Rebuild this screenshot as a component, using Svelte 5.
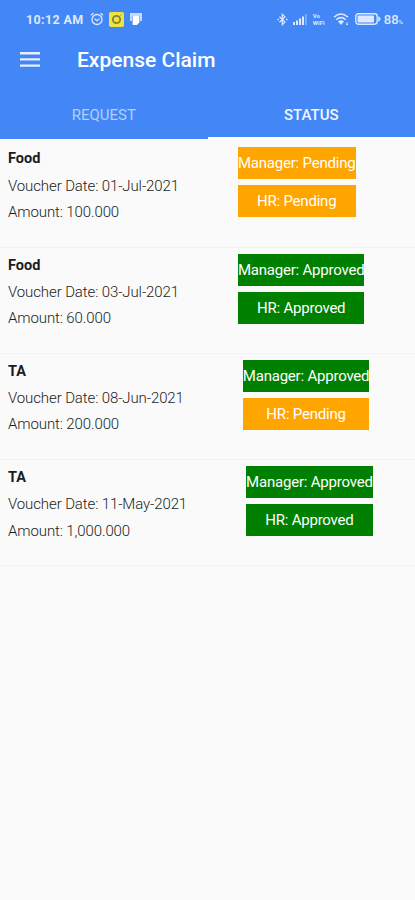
<script lang="ts">
	type Status = 'Pending' | 'Approved';

	interface Claim {
		type: string;
		date: string;
		amount: string;
		manager: Status;
		hr: Status;
	}

	const tabs = ['REQUEST', 'STATUS'];
	let activeTab = $state('STATUS');

	const claims: Claim[] = [
		{ type: 'Food', date: '01-Jul-2021', amount: '100.000', manager: 'Pending', hr: 'Pending' },
		{ type: 'Food', date: '03-Jul-2021', amount: '60.000', manager: 'Approved', hr: 'Approved' },
		{ type: 'TA', date: '08-Jun-2021', amount: '200.000', manager: 'Approved', hr: 'Pending' },
		{ type: 'TA', date: '11-May-2021', amount: '1,000.000', manager: 'Approved', hr: 'Approved' }
	];
</script>

<div class="screen">
	<header>
		<div class="status-bar">
			<div class="status-left">
				<span class="clock">10:12 AM</span>
				<svg class="alarm" width="14" height="14" viewBox="0 0 14 14" fill="none" stroke="currentColor">
					<circle cx="7" cy="7.5" r="5" stroke-width="1.3" />
					<path d="M1 3.2 3.4 1.2M13 3.2 10.6 1.2" stroke-width="1.4" />
					<path d="M4.6 6.8 7 8.8 9.6 6.6" stroke-width="1.2" />
				</svg>
				<svg class="app-badge" width="15" height="15" viewBox="0 0 15 15">
					<rect width="15" height="15" rx="2" fill="#f0e33c" />
					<circle cx="7.5" cy="7.5" r="3.7" fill="none" stroke="#81833f" stroke-width="1.8" />
					<circle cx="11.9" cy="3" r="0.8" fill="#a5a23c" />
				</svg>
				<svg class="printer" width="14" height="14" viewBox="0 0 14 14">
					<path d="M1 1h12v8h-2V4H3v5H1z" fill="#c4dafb" />
					<path d="M3.6 4h6.8v6.2L8 13H3.6z" fill="#fff" />
				</svg>
			</div>
			<div class="status-right">
				<svg width="11" height="13" viewBox="0 0 11 13" fill="none" stroke="currentColor" stroke-width="1.2">
					<path d="M2.5 3.8 8 9 5.3 11.7V1.3L8 4 2.5 9.2" />
					<path d="M.4 6.5h1.5M9.1 6.5h1.5" stroke-width="1.5" />
				</svg>
				<svg class="signal" width="14" height="11" viewBox="0 0 14 11" fill="currentColor">
					<path d="M0 8h2v3H0zM3 6.5h2V11H3zM6 4.5h2V11H6zM9 2.5h2V11H9z" />
					<path d="M12 0h1.8v11H12z" opacity=".4" />
				</svg>
				<span class="vowifi"><span>Vo</span><span>WiFi</span></span>
				<svg class="wifi" width="17" height="13" viewBox="0 0 17 13" fill="none" stroke="currentColor" stroke-width="1.5">
					<path d="M1 4.3Q8 -2.2 15 4.3M3.2 6.8Q8 2.4 12.8 6.8" />
					<path d="M5 8.4Q8 6 11 8.4L8 12z" fill="currentColor" stroke="none" />
					<path d="M14 9v3M12.7 10.8 14 12l1.3-1.2" stroke-width=".8" />
				</svg>
				<svg class="battery" width="26" height="12" viewBox="0 0 26 12">
					<rect x=".8" y=".8" width="21.4" height="10.4" rx="2.6" fill="none" stroke="currentColor" stroke-width="1.4" />
					<rect x="2.6" y="2.6" width="16.4" height="6.8" rx=".7" fill="currentColor" />
					<path d="M23.3 3.2Q25.6 4 25.6 6t-2.3 2.8z" fill="currentColor" />
				</svg>
				<span class="percent">88<small>%</small></span>
			</div>
		</div>

		<div class="app-bar">
			<button class="menu" aria-label="Menu">
				<svg width="20" height="15" viewBox="0 0 20 15" fill="currentColor">
					<path d="M0 0h20v2.4H0zM0 6.2h20v2.4H0zM0 12.4h20v2.4H0z" />
				</svg>
			</button>
			<h1>Expense Claim</h1>
		</div>

		<nav>
			{#each tabs as tab}
				<button class="tab" class:active={activeTab === tab} onclick={() => (activeTab = tab)}>
					{tab}
				</button>
			{/each}
		</nav>
	</header>

	<main>
		{#each claims as claim}
			<article>
				<div class="details">
					<h2>{claim.type}</h2>
					<p>Voucher Date: {claim.date}</p>
					<p>Amount: {claim.amount}</p>
				</div>
				<div class="approvals">
					<span class="badge {claim.manager.toLowerCase()}">Manager: {claim.manager}</span>
					<span class="badge {claim.hr.toLowerCase()}">HR: {claim.hr}</span>
				</div>
			</article>
		{/each}
	</main>
</div>

<style>
	:global(body) {
		background: #fafafa;
	}

	.screen {
		min-height: 900px;
		font-family: Roboto, sans-serif;
		color: #1c1c1c;
		background: #fafafa;
		overflow: hidden;
	}

	header {
		background: #4387f6;
		color: #fff;
	}

	.status-bar {
		display: flex;
		justify-content: space-between;
		align-items: center;
		height: 38px;
		padding: 0 12px 0 26px;
		box-sizing: border-box;
		color: #dce9ff;
	}

	.status-left,
	.status-right {
		display: flex;
		align-items: center;
	}

	.clock {
		width: 64px;
		font-size: 12.5px;
		font-weight: 700;
		letter-spacing: 0.35px;
		white-space: nowrap;
	}

	.app-badge,
	.printer,
	.signal,
	.wifi {
		margin-left: 5px;
	}

	.vowifi {
		display: flex;
		flex-direction: column;
		width: 15px;
		margin-left: 6px;
		font-size: 6px;
		font-weight: 700;
		line-height: 7.5px;
	}

	.battery {
		margin-left: 5px;
	}

	.percent {
		margin-left: 3px;
		font-size: 13px;
		font-weight: 500;
		white-space: nowrap;
	}

	.percent small {
		font-size: 6px;
	}

	.app-bar {
		display: flex;
		align-items: center;
		height: 44px;
		padding-left: 20px;
	}

	button {
		padding: 0;
		border: 0;
		background: none;
		color: inherit;
		font: inherit;
		cursor: pointer;
	}

	.menu {
		display: flex;
		width: 57px;
		padding-bottom: 2px;
		color: #e6f0ff;
	}

	h1 {
		margin: 0;
		font-size: 21px;
		font-weight: 500;
	}

	nav {
		display: flex;
		height: 57px;
	}

	.tab {
		flex: 1;
		padding-top: 10px;
		border-bottom: 2px solid transparent;
		font-size: 15px;
		font-weight: 500;
		color: #b1d0fb;
	}

	.tab:not(.active) {
		font-weight: 400;
	}

	.tab.active {
		color: #f0f6ff;
		border-bottom-color: #fff;
	}

	main {
		padding-top: 2.6px;
	}

	article {
		display: flex;
		align-items: flex-start;
		gap: 59px;
		height: 106.2px;
		padding: 5.8px 8px 0;
		box-sizing: border-box;
		border-bottom: 1px solid #f1f1f1;
	}

	h2,
	p {
		margin: 0;
		font-size: 15px;
		line-height: 26.3px;
		white-space: nowrap;
	}

	h2 {
		margin-top: -1px;
		font-size: 14.5px;
		font-weight: 700;
	}

	p {
		font-weight: 300;
		letter-spacing: -0.11px;
	}

	.approvals {
		display: flex;
		flex-direction: column;
		gap: 6px;
	}

	.badge {
		height: 32px;
		font-size: 15px;
		line-height: 32px;
		letter-spacing: -0.21px;
		text-align: center;
		white-space: nowrap;
		color: #fff;
	}

	.badge.pending {
		background: #ffa500;
	}

	.badge.approved {
		background: #008000;
	}
</style>
